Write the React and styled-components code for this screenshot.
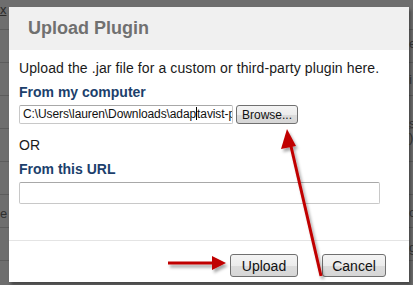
import React from 'react';
import styled, { createGlobalStyle } from 'styled-components';

const GlobalStyle = createGlobalStyle`
html, body {
margin: 0;
padding: 0;
}
body {
width: 413px;
height: 285px;
overflow: hidden;
background: #6e6e6e;
font-family: 'Liberation Sans', Arial, sans-serif;
}
`;

export const Page = styled.div`
position: relative;
width: 413px;
height: 285px;
padding: 7px 0 0 9px;
box-sizing: border-box;
overflow: hidden;
background:
  repeating-linear-gradient(to bottom, transparent 0px, transparent 29px, #5c5c5c 29px, #5c5c5c 30px, transparent 30px, transparent 33px);
`;

export const BackLink = styled.span`
position: absolute;
left: 0;
top: 2px;
font-size: 13px;
color: #2a2a2a;
text-decoration: underline;
`;

export const BackGlyph = styled.span`
position: absolute;
left: ${(p) => p.x}px;
top: ${(p) => p.y}px;
font-size: 13px;
color: #2e2e2e;
`;

export const Dialog = styled.div`
width: 400px;
height: 275px;
background: #ffffff;
display: flex;
flex-direction: column;
box-shadow: 2px 3px 3px rgba(0, 0, 0, 0.35);
`;

export const Header = styled.div`
height: 43px;
background: #f0f0f0;
padding: 0 19px;
display: flex;
align-items: center;
`;

export const Title = styled.h2`
margin: 0;
font-size: 18px;
font-weight: bold;
color: #707070;
`;

export const Body = styled.div`
flex: 1;
padding: 10px 11px 0 10px;
display: flex;
flex-direction: column;
`;

export const Intro = styled.p`
margin: 0;
font-size: 14px;
line-height: 17px;
letter-spacing: 0.1px;
color: #1a1a1a;
`;

export const Label = styled.div`
margin-top: ${(p) => p.top}px;
font-size: 14px;
font-weight: bold;
line-height: 16px;
color: #1c3f6c;
`;

export const FileRow = styled.div`
margin-top: 5px;
display: flex;
align-items: center;
gap: 3px;
`;

export const TextField = styled.div`
width: ${(p) => p.w}px;
height: ${(p) => p.h}px;
box-sizing: border-box;
border: 1px solid #c8c8c8;
border-top-color: #a8a8a8;
border-radius: 2px;
background: #fff;
padding: 0 0 0 3px;
font-size: 12px;
line-height: ${(p) => p.h - 2}px;
letter-spacing: -0.1px;
color: #111;
white-space: nowrap;
overflow: hidden;
`;

export const Caret = styled.span`
display: inline-block;
width: 1px;
height: 13px;
background: #000;
vertical-align: -2px;
`;

export const Button = styled.div`
width: ${(p) => p.w}px;
height: ${(p) => p.h}px;
box-sizing: border-box;
border: 1px solid #707070;
border-radius: 3px;
background: linear-gradient(to bottom, #f4f4f4 0%, #ececec 50%, #dcdcdc 51%, #d6d6d6 100%);
display: flex;
align-items: center;
justify-content: center;
font-size: ${(p) => p.fs}px;
color: #111;
`;

export const Or = styled.div`
margin-top: 13px;
font-size: 14px;
line-height: 16px;
color: #1a1a1a;
`;

export const UrlRow = styled.div`
margin-top: 5px;
`;

export const Footer = styled.div`
height: 42px;
border-top: 1px solid #e4e4e4;
display: flex;
justify-content: flex-end;
align-items: flex-start;
padding: 13px 23px 0 0;
gap: 24px;
box-sizing: border-box;
`;

export const Arrows = styled.svg`
position: absolute;
left: 0;
top: 0;
pointer-events: none;
`;

const App = () => {
    return (
        <>
            <GlobalStyle />
            <Page>
                <BackLink>x</BackLink>
                <BackGlyph x={0} y={206}>e</BackGlyph>
                <BackGlyph x={409} y={36}>e</BackGlyph>
                <BackGlyph x={409} y={72}>i</BackGlyph>
                <BackGlyph x={409} y={116}>s</BackGlyph>
                <BackGlyph x={409} y={130}>)</BackGlyph>
                <BackGlyph x={409} y={205}>o</BackGlyph>
                <BackGlyph x={409} y={240}>g</BackGlyph>
                <Dialog>
                    <Header>
                        <Title>Upload Plugin</Title>
                    </Header>
                    <Body>
                        <Intro>Upload the .jar file for a custom or third-party plugin here.</Intro>
                        <Label top={7}>From my computer</Label>
                        <FileRow>
                            <TextField w={214} h={19}>C:\Users\lauren\Downloads\adap<Caret />tavist-plug</TextField>
                            <Button w={62} h={19} fs={12}>Browse...</Button>
                        </FileRow>
                        <Or>OR</Or>
                        <Label top={8}>From this URL</Label>
                        <UrlRow>
                            <TextField w={361} h={22} />
                        </UrlRow>
                    </Body>
                    <Footer>
                        <Button w={68} h={23} fs={14}>Upload</Button>
                        <Button w={64} h={23} fs={14}>Cancel</Button>
                    </Footer>
                </Dialog>
                <Arrows width="413" height="285" viewBox="0 0 413 285">
                    <defs>
                        <filter id="sh" x="-20%" y="-20%" width="140%" height="140%">
                            <feDropShadow dx="2" dy="3" stdDeviation="1.5" floodColor="#000" floodOpacity="0.35" />
                        </filter>
                    </defs>
                    <g filter="url(#sh)" fill="#c00000" stroke="#c00000">
                        <line x1="321" y1="276" x2="290" y2="142" strokeWidth="3" />
                        <polygon points="287,129 281,149 296,146" stroke="none" />
                        <line x1="168" y1="263" x2="214" y2="263" strokeWidth="3" />
                        <polygon points="226,263 212,256 212,270" stroke="none" />
                    </g>
                </Arrows>
            </Page>
        </>
    );
};

export default App;
